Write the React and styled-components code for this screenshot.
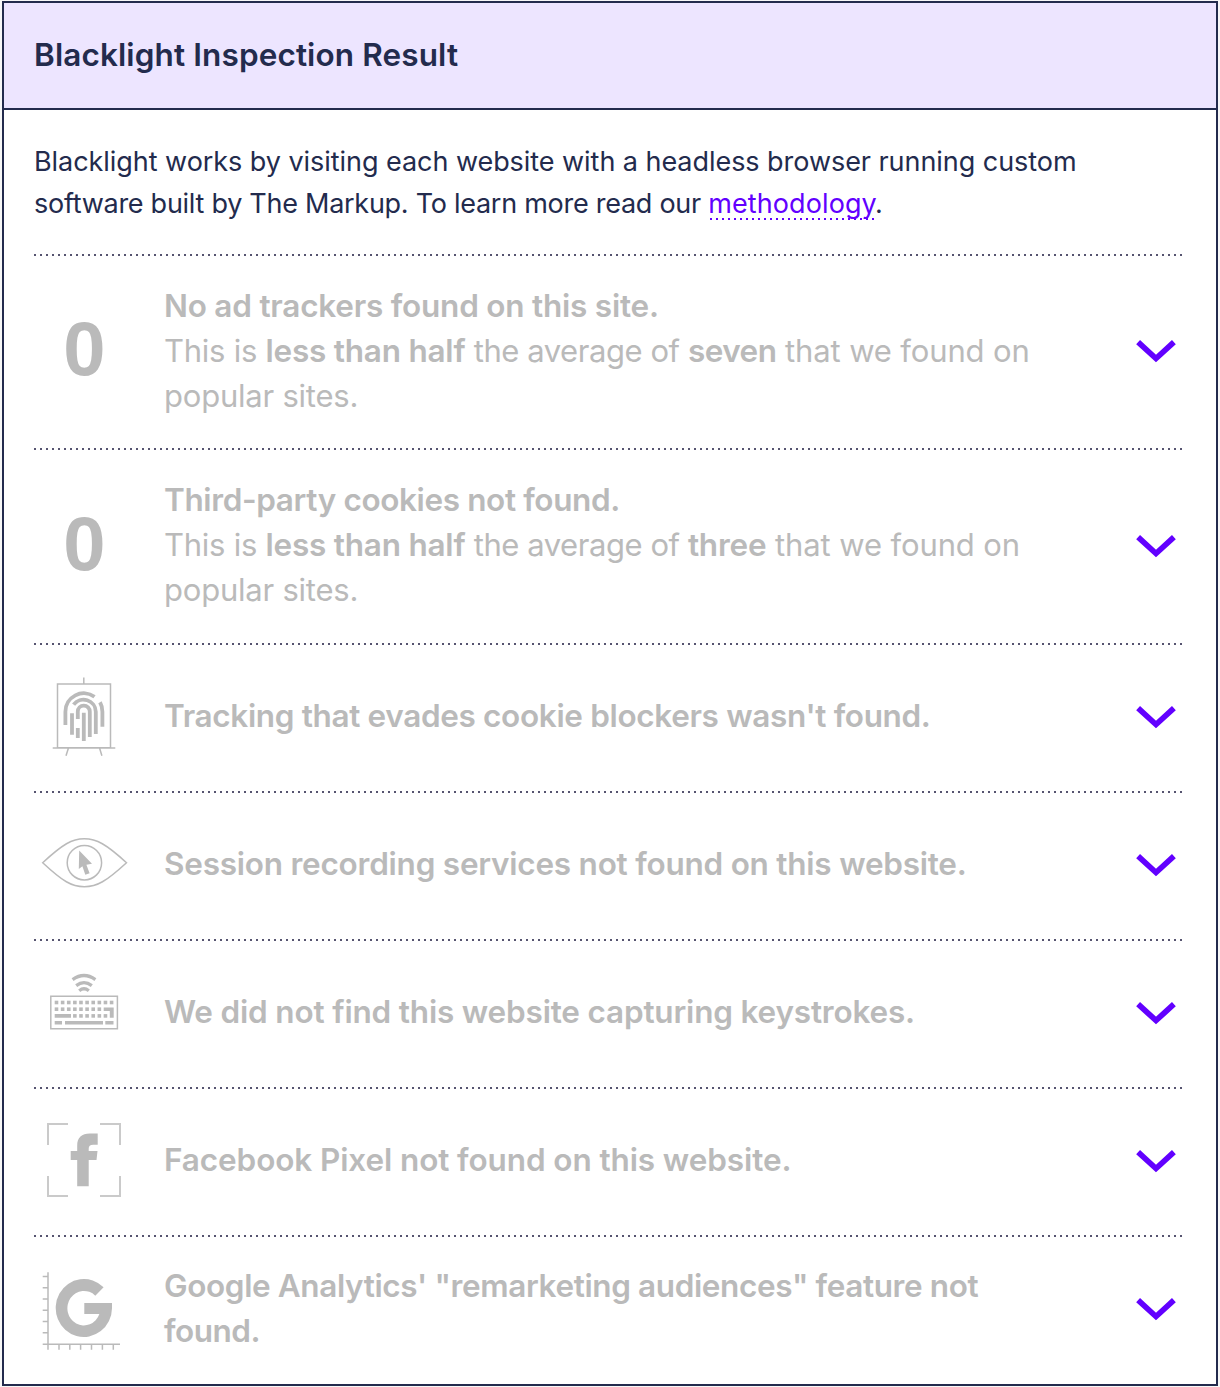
import React from 'react';
import styled, { createGlobalStyle } from 'styled-components';

const INK = '#232b4d';
const GREY = '#bababa';
const VIOLET = '#6200ff';

const GlobalStyle = createGlobalStyle`
  * { box-sizing: border-box; }
  body { margin: 0; background: #f7f7f7; font-family: Inter, "Liberation Sans", sans-serif; }
`;

const Card = styled.main`
  width: 1216px;
  height: 1385px;
  margin: 1px 2px 0;
  border: 2px solid ${INK};
  background: #fff;
  color: ${INK};
`;

const Header = styled.header`
  height: 107px;
  display: flex;
  align-items: center;
  padding: 0 30px 2px;
  background: #ede5ff;
  border-bottom: 2px solid ${INK};
`;

const Title = styled.h1`
  margin: 0;
  font-size: 31.5px;
  line-height: 44px;
  font-weight: 600;
  letter-spacing: 0.12px;
`;

const Body = styled.div`
  padding: 0 34px 0 30px;
`;

const Intro = styled.p`
  margin: 0;
  height: 144px;
  padding-top: 31px;
  font-size: 27px;
  line-height: 42px;
`;

const Line = styled.span`
  display: block;
  width: max-content;
  white-space: nowrap;
  letter-spacing: ${(p) => p.$track || 0}px;
`;

const Run = styled.span`
  letter-spacing: ${(p) => p.$track}px;
`;

const Link = styled.a`
  color: ${VIOLET};
  margin-right: -2px;
  letter-spacing: 0.1px;
  background: repeating-linear-gradient(90deg, transparent 0 2px, ${VIOLET} 2px 4px, transparent 4px 6px) left bottom / 100% 2px no-repeat;
`;

const Row = styled.section`
  height: ${(p) => (p.$tall ? 194.4 : 148)}px;
  display: grid;
  grid-template-columns: 100px 1fr 40px;
  column-gap: 30px;
  align-items: center;
  padding-right: 6px;
  color: ${GREY};
  background: repeating-linear-gradient(90deg, #565470 0 2px, transparent 2px 6px) left top / 100% 2px no-repeat;
`;

const Count = styled.div`
  padding: 0 0 4px 1px;
  text-align: center;
  font: bold 76px/100px "Liberation Sans", sans-serif;
`;

const Copy = styled.div`
  font-size: ${(p) => (p.$bold ? 31.5 : 31)}px;
  line-height: 44.8px;
  font-weight: ${(p) => (p.$bold ? 600 : 400)};
`;

const Strong = styled.strong`
  font-size: 31.5px;
  line-height: 1;
  font-weight: 600;
  letter-spacing: ${(p) => p.$track ?? -0.22}px;
`;

const IconBox = styled.svg`
  display: block;
  width: 100px;
  height: 100px;
`;

const Arrow = styled.svg`
  display: block;
  width: 40px;
  height: 24px;
`;

const Chevron = () => (
  <Arrow viewBox="0 0 40 24" fill="none" stroke={VIOLET} strokeWidth="5.7">
    <path d="M2.1 3.2 20 19.5 37.9 3.2" />
  </Arrow>
);

const Fingerprint = () => (
  <IconBox viewBox="0 0 100 100" fill="none" stroke={GREY}>
    <path strokeWidth="1.5" d="M23.5 17h53v63.7h-53zM49.8 10.5V17M18.7 80.9h62.6M34.3 81.5 32 88.8M65.7 81.5l2.2 7.3" />
    <path strokeWidth="3.8" d="M31.4 58V44.7A18.4 18.4 0 0 1 60.5 29.7M66 35.3Q68.4 39.5 68.4 44.7V59.8M39.6 37.7A12.3 12.3 0 0 1 61.8 44.7V67M38 46.3V67.8M43.8 52V44.7a6 6 0 0 1 12 0V70M43.8 61V71M49.8 45.7V74" />
  </IconBox>
);

const Eye = () => (
  <IconBox viewBox="0 0 100 100" fill="none" stroke={GREY} strokeWidth="1.5">
    <path d="M8.7 47.7C29 29 38 23.8 50.3 23.8S72 29 92.5 47.7C72 66.5 63 71.7 50.3 71.7S29 66.5 8.7 47.7Z" />
    <circle cx="50.4" cy="47.7" r="17.2" />
    <path fill={GREY} stroke="none" d="m45.2 35.4 12.8 13.3-5.6 1.1 3.2 8.5-4.3 1.5-2.9-8.6-3.6 2.9z" />
  </IconBox>
);

const KEY_ROWS = [
  { y: 37.7, cols: [0, 1, 2, 3, 4, 5, 6, 7, 8, 9] },
  { y: 44.4, cols: [0, 1, 2, 3, 4, 5, 6, 7] },
  { y: 51.1, cols: [3, 4, 5, 6, 7, 8] },
];

const Keyboard = () => (
  <IconBox viewBox="0 0 100 100" fill={GREY}>
    <path fill="none" stroke={GREY} strokeWidth="1.5" d="M16.8 33.2h66.6v32.6H16.8z" />
    {KEY_ROWS.map(({ y, cols }) =>
      cols.map((c) => <rect key={`${y}-${c}`} x={20.7 + c * 6.12} y={y} width="3.6" height="3.6" />)
    )}
    <path d="M69.7 44.4h10v10.3h-3.9v-6.7h-6.1zM20.7 51.1H37v3.6H20.7zM20.7 58H28v3.4h-7.3zM31 58h38v3.4H31zM71.3 58h8.2v3.4h-8.2z" />
    <path fill="none" stroke={GREY} strokeWidth="3.3" d="M38.6 16.6Q50 8.4 61.4 16.6M42.2 22.6Q50 16.6 57.8 22.6M45.2 27.7Q50 23.9 54.8 27.7" />
  </IconBox>
);

const FacebookPixel = () => (
  <IconBox viewBox="0 0 100 100" fill={GREY}>
    <path fill="none" stroke="#cacaca" strokeWidth="2" d="M14 34V13h20M66 13h20v21M86 65v20H66M34 85H14V65" />
    <path d="M63.7 22.5v11.2h-4.5c-3.2 0-4.5 1.2-4.5 4V40h8.8l-1 9h-7.8v26.3H43.2V49h-6.5v-9h6.5v-5.3c0-8.2 4.6-12.2 12.6-12.2z" />
  </IconBox>
);

const GoogleChart = () => (
  <IconBox viewBox="0 0 100 100" fill={GREY}>
    <path fill="none" stroke={GREY} strokeWidth="1.5" d="M14 13.3V90.7M8.7 85.2H86M8.7 17.5H14M8.7 28.8H14M8.7 40H14M8.7 51.3H14M8.7 62.6H14M8.7 73.8H14M25 85v5.7M35.8 85v5.7M46.6 85v5.7M57.5 85v5.7M68.4 85v5.7M79.3 85v5.7" />
    <path d="M69.6 28.3A28.15 29 0 1 0 78 49.3V44.1H50.3v11H65.4A16.5 17.3 0 1 1 61.3 36.7z" />
  </IconBox>
);

const Finding = ({ mark, tall, bold, children }) => (
  <Row $tall={tall}>
    {mark}
    <Copy $bold={bold}>{children}</Copy>
    <Chevron />
  </Row>
);

export default function App() {
  return (
    <>
      <GlobalStyle />
      <Card>
        <Header><Title>Blacklight Inspection Result</Title></Header>
        <Body>
          <Intro>
            <Line $track={-0.05}>Blacklight works by visiting each website with a headless browser running custom</Line>
            <Line $track={-0.27}>software built by The Markup. To learn more read our <Link>methodology</Link>.</Line>
          </Intro>
          <Finding tall mark={<Count>0</Count>}>
            <Line><Strong>No ad trackers found on this site.</Strong></Line>
            <Line $track={-0.26}>
              This is <Strong>less than half</Strong>
              <Run $track={-0.44}> the average of </Run>
              <Strong $track={-0.5}>seven</Strong>
              <Run $track={-0.14}> that we found on</Run>
            </Line>
            <Line $track={-0.22}>popular sites.</Line>
          </Finding>
          <Finding tall mark={<Count>0</Count>}>
            <Line><Strong $track={-0.37}>Third-party cookies not found.</Strong></Line>
            <Line $track={-0.26}>
              This is <Strong>less than half</Strong>
              <Run $track={-0.44}> the average of </Run>
              <Strong>three</Strong>
              <Run $track={-0.1}> that we found on</Run>
            </Line>
            <Line $track={-0.22}>popular sites.</Line>
          </Finding>
          <Finding bold mark={<Fingerprint />}>
            <Line $track={-0.34}>Tracking that evades cookie blockers wasn't found.</Line>
          </Finding>
          <Finding bold mark={<Eye />}>
            <Line $track={-0.23}>Session recording services not found on this website.</Line>
          </Finding>
          <Finding bold mark={<Keyboard />}>
            <Line $track={-0.18}>We did not find this website capturing keystrokes.</Line>
          </Finding>
          <Finding bold mark={<FacebookPixel />}>
            <Line $track={-0.1}>Facebook Pixel not found on this website.</Line>
          </Finding>
          <Finding bold mark={<GoogleChart />}>
            <Line $track={-0.38}>Google Analytics' "remarketing audiences" feature not</Line>
            <Line $track={-0.5}>found.</Line>
          </Finding>
        </Body>
      </Card>
    </>
  );
}
